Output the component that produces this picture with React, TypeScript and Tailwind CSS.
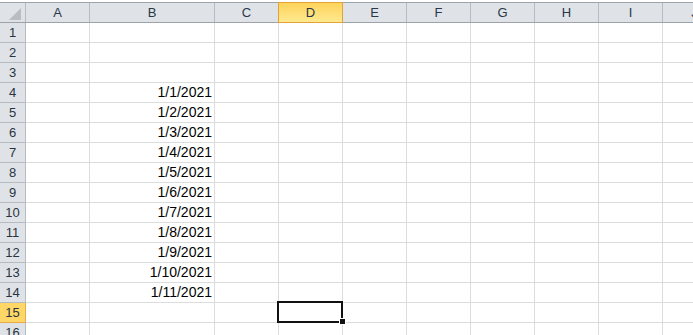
import React from "react";

const cols = ["A", "B", "C", "D", "E", "F", "G", "H", "I", "J"];
const widths: Record<string, string> = {
  A: "w-[64px]",
  B: "w-[125px]",
  C: "w-[64px]",
  D: "w-[64px]",
  E: "w-[64px]",
  F: "w-[64px]",
  G: "w-[64px]",
  H: "w-[64px]",
  I: "w-[64px]",
  J: "w-[64px]",
};

const dates: Record<number, string> = {
  4: "1/1/2021",
  5: "1/2/2021",
  6: "1/3/2021",
  7: "1/4/2021",
  8: "1/5/2021",
  9: "1/6/2021",
  10: "1/7/2021",
  11: "1/8/2021",
  12: "1/9/2021",
  13: "1/10/2021",
  14: "1/11/2021",
};

const rows = Array.from({ length: 16 }, (_, i) => i + 1);

function ColumnHeader({ col }: { col: string }) {
  const active = col === "D";
  return (
    <div
      className={`relative shrink-0 ${widths[col]} h-full border-r border-[#b6bbc1] flex items-center justify-center`}
    >
      {active && (
        <div className="absolute -left-px -top-px -right-px -bottom-px bg-gradient-to-b from-[#fdd35a] to-[#ffe98e] border border-[#e3a33b]" />
      )}
      <span className="relative text-[13px] text-[#283848]">{col}</span>
    </div>
  );
}

export default function App() {
  return (
    <div className="relative w-[693px] h-[335px] overflow-hidden bg-white pt-[2px] font-['Liberation_Sans',Arial,sans-serif]">
      {/* column headers */}
      <div className="flex h-[21px] border-t border-b border-[#9ea3a9] bg-[#dfe3e8] w-max">
        <div className="relative shrink-0 w-[26px] h-full border-r border-[#b6bbc1]">
          <svg className="absolute right-[4px] bottom-[2px]" width="12" height="12" viewBox="0 0 12 12">
            <polygon points="12,0 12,12 0,12" fill="#b9bdc2" />
          </svg>
        </div>
        {cols.map((c) => (
          <ColumnHeader key={c} col={c} />
        ))}
      </div>

      {/* rows */}
      {rows.map((r) => {
        const active = r === 15;
        return (
          <div key={r} className="flex h-[20px] w-max">
            <div
              className={`relative shrink-0 w-[26px] h-full border-r border-b flex items-center justify-center ${
                active ? "bg-[#fed766] border-[#e6ab4a]" : "bg-[#dfe3e8] border-[#b6bbc1]"
              }`}
            >
              <span className="text-[13px] text-[#2a3440]">{r}</span>
            </div>
            {cols.map((c) => (
              <div
                key={c}
                className={`shrink-0 ${widths[c]} h-full border-r border-b border-[#dadcdd] flex items-end justify-end pr-[2px]`}
              >
                {c === "B" && dates[r] && (
                  <span className="text-[14px] leading-[19px] text-black">{dates[r]}</span>
                )}
              </div>
            ))}
          </div>
        );
      })}

      {/* active cell D15 */}
      <div className="absolute left-[277px] top-[301px] w-[66px] h-[22px] border-2 border-[#111]" />
      <div className="absolute left-[339px] top-[318px] w-[7px] h-[7px] bg-[#111] border border-white" />
    </div>
  );
}
